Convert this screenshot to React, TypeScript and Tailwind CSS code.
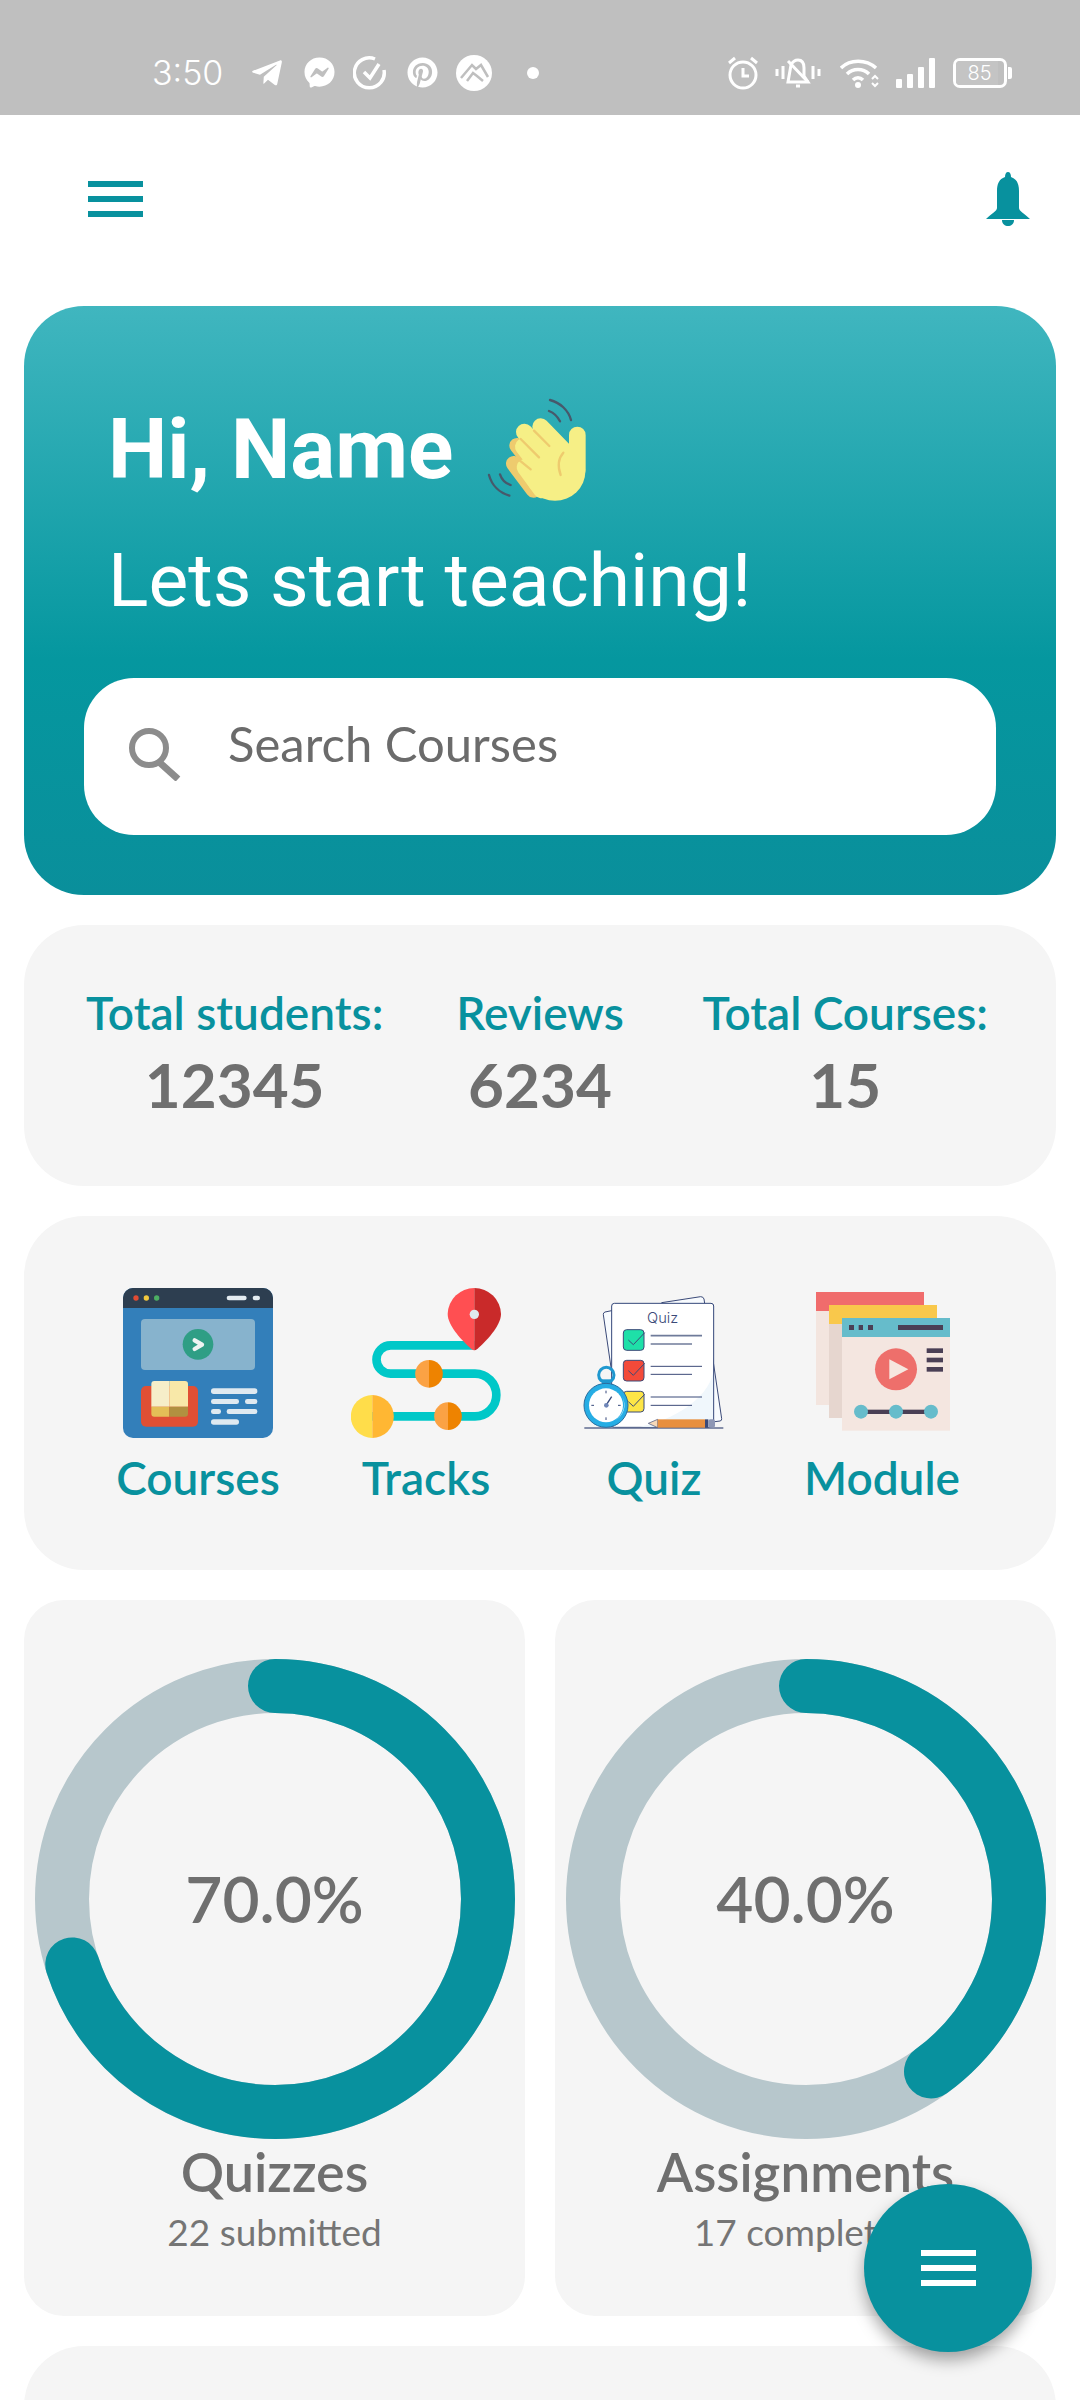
import { FaTelegramPlane, FaFacebookMessenger, FaPinterest } from 'react-icons/fa';

const tools = [
  { label: 'Courses', icon: CoursesIcon },
  { label: 'Tracks', icon: TracksIcon },
  { label: 'Quiz', icon: QuizIcon },
  { label: 'Module', icon: ModuleIcon },
];

const stats = [
  { label: 'Total students:', value: '12345' },
  { label: 'Reviews', value: '6234' },
  { label: 'Total Courses:', value: '15' },
];

function CoursesIcon() {
  return (
    <svg viewBox="99 84 450 450" className="w-[150px] h-[150px]">
      <rect x="99" y="84" width="450" height="450" rx="30" fill="#337fba" />
      <path d="M99 144V114a30 30 0 0 1 30-30H519a30 30 0 0 1 30 30V144Z" fill="#2d3e50" />
      <circle cx="138" cy="114" r="8" fill="#e24b33" />
      <circle cx="169" cy="114" r="8" fill="#f2c83e" />
      <circle cx="200" cy="114" r="8" fill="#4caf63" />
      <rect x="410" y="107" width="60" height="14" rx="7" fill="#e4ecf1" />
      <rect x="488" y="107" width="22" height="14" rx="7" fill="#e4ecf1" />
      <rect x="153" y="177" width="342" height="153" rx="12" fill="#87b3cd" />
      <circle cx="324" cy="253" r="46" fill="#2f9e85" />
      <path d="M314 241L336 254L314 267" fill="none" stroke="#eef4f2" strokeWidth="13" strokeLinecap="round" strokeLinejoin="round" />
      <rect x="153" y="378" width="171" height="122" rx="15" fill="#e04f34" />
      <path d="M184 372a9 9 0 0 1 9-9H238V440H184Z" fill="#f6eec9" />
      <path d="M238 363H285a9 9 0 0 1 9 9V440H238Z" fill="#f8e8a8" />
      <path d="M184 440H238V470H193a9 9 0 0 1-9-9Z" fill="#e4bf57" />
      <path d="M238 440H294V461a9 9 0 0 1-9 9H238Z" fill="#b19040" />
      <g fill="#dfe9f0">
        <rect x="363" y="385" width="139" height="17" rx="8" />
        <rect x="363" y="417" width="84" height="15" rx="7" />
        <rect x="465" y="417" width="37" height="15" rx="7" />
        <rect x="363" y="447" width="30" height="15" rx="7" />
        <rect x="410" y="447" width="92" height="15" rx="7" />
        <rect x="363" y="478" width="84" height="16" rx="8" />
      </g>
    </svg>
  );
}

function TracksIcon() {
  return (
    <svg viewBox="783 84 450 450" className="w-[150px] h-[150px]">
      <path d="M847 469H1155A64 64 0 0 0 1155 341H902A42.500 42.500 0 0 1 902 256H1153" fill="none" stroke="#00c8c8" strokeWidth="26" />
      <path d="M1153 84A80 80 0 0 0 1073 162C1073 198 1120 246 1143 266Q1153 273 1153 270Z" fill="#ff4f52" />
      <path d="M1153 84A80 80 0 0 1 1233 162C1233 198 1186 246 1163 266Q1153 273 1153 270Z" fill="#c92a2a" />
      <circle cx="1153" cy="163" r="14" fill="#dfe9ec" />
      <path d="M1017 300a41 41 0 0 0 0 83Z" fill="#fba244" />
      <path d="M1017 300a41 41 0 0 1 0 83Z" fill="#ee8300" />
      <path d="M1074 427a41 41 0 0 0 0 83Z" fill="#fba244" />
      <path d="M1074 427a41 41 0 0 1 0 83Z" fill="#ee8300" />
      <path d="M847 405a64 64 0 0 0 0 129Z" fill="#ffdd4a" />
      <path d="M847 405a64 64 0 0 1 0 129Z" fill="#ffb733" />
    </svg>
  );
}

function QuizIcon() {
  return (
    <svg viewBox="57 84 450 450" className="w-[150px] h-[150px]">
      <path d="M155 152L135 156Q129 158 130 164L160 370H200V200Z" fill="#f8fbfe" stroke="#3b4a78" strokeWidth="3" />
      <path d="M305 128L422 110Q430 110 432 117L485 476Q486 482 480 483L440 488Z" fill="#f8fbfe" stroke="#3b4a78" strokeWidth="3" />
      <rect x="155" y="130" width="306" height="372" rx="8" fill="#ffffff" stroke="#34477a" strokeWidth="3" />
      <path d="M459 340C440 420 340 480 240 500H459Z" fill="#f0f7fc" />
      <text x="308" y="188" textAnchor="middle" fontSize="44" fill="#3b4a78" className="font-['Inter',sans-serif] font-light">Quiz</text>
      <rect x="190" y="209" width="62" height="62" rx="10" fill="#1ee0a8" stroke="#3b4a78" strokeWidth="3" />
      <rect x="190" y="301" width="62" height="62" rx="10" fill="#f34a3a" stroke="#3b4a78" strokeWidth="3" />
      <rect x="190" y="394" width="62" height="62" rx="10" fill="#fde546" stroke="#3b4a78" strokeWidth="3" />
      <g fill="none" stroke="#3b4a78" strokeWidth="3">
        <path d="M205 240L220 254L254 218" />
        <path d="M205 332L220 346L254 310" />
        <path d="M205 425L220 439L254 403" />
      </g>
      <g stroke="#6f7b9a" strokeWidth="5">
        <path d="M272 227H426" />
        <path d="M272 252H396" />
      </g>
      <g stroke="#3b4a78" strokeWidth="3">
        <path d="M272 319H426" />
        <path d="M272 343H396" />
        <path d="M272 411H426" />
        <path d="M272 436H396" />
      </g>
      <path d="M73 504H490" stroke="#5f6b8f" strokeWidth="4" />
      <path d="M265 490L293 478V503Z" fill="#f6d8b8" stroke="#3b4a78" strokeWidth="2" />
      <rect x="293" y="478" width="142" height="25" fill="#e88f3f" />
      <rect x="435" y="478" width="10" height="25" fill="#3b4a78" />
      <rect x="445" y="478" width="20" height="25" rx="6" fill="#8e97b5" />
      <circle cx="139" cy="345" r="23" fill="none" stroke="#1f98cf" strokeWidth="9" />
      <rect x="126" y="358" width="26" height="14" fill="#1f98cf" />
      <circle cx="138" cy="436" r="66" fill="#26ade4" stroke="#2a6d9e" strokeWidth="3" />
      <circle cx="138" cy="436" r="51" fill="#ffffff" />
      <path d="M187 410A56 56 0 0 1 166 481A52 52 0 0 0 187 410Z" fill="#d4eefa" />
      <path d="M138 436L155 410" stroke="#34477a" strokeWidth="4" />
      <circle cx="139" cy="436" r="7" fill="#6f86b8" />
      <g stroke="#34477a" strokeWidth="3">
        <path d="M138 392V400" />
        <path d="M138 472V480" />
        <path d="M94 436H102" />
        <path d="M174 436H182" />
      </g>
    </svg>
  );
}

function ModuleIcon() {
  return (
    <svg viewBox="741 84 450 450" className="w-[150px] h-[150px]">
      <rect x="768" y="96" width="324" height="339" fill="#f3e5df" />
      <rect x="768" y="96" width="324" height="57" fill="#f06c6c" />
      <rect x="807" y="135" width="324" height="339" fill="#e6d6cf" />
      <rect x="807" y="135" width="324" height="57" fill="#f9c84b" />
      <rect x="846" y="174" width="324" height="338" fill="#f4e6e0" />
      <rect x="846" y="174" width="324" height="57" fill="#66bccb" />
      <g fill="#4a3f55">
        <rect x="867" y="195" width="15" height="15" />
        <rect x="896" y="195" width="13" height="15" />
        <rect x="924" y="195" width="15" height="15" />
        <rect x="1014" y="195" width="135" height="15" />
        <rect x="1100" y="265" width="49" height="14" />
        <rect x="1100" y="293" width="49" height="14" />
        <rect x="1100" y="321" width="49" height="14" />
        <rect x="903" y="449" width="210" height="13" />
      </g>
      <circle cx="1008" cy="328" r="63" fill="#ee6f6b" />
      <path d="M988 298L1045 328L988 358Z" fill="#f6e7df" />
      <g fill="#66bccb">
        <circle cx="903" cy="455" r="21" />
        <circle cx="1008" cy="455" r="21" />
        <circle cx="1113" cy="455" r="21" />
      </g>
    </svg>
  );
}

function WaveHand() {
  return (
    <svg viewBox="0 0 390 390" className="w-[130px] h-[130px]">
      <g fill="none" strokeLinecap="round" stroke="#47596b" strokeWidth="7">
        <path d="M240 60C270 68 295 90 303 120" />
        <path d="M237 93C250 98 262 108 270 124" />
        <path d="M57 285C65 315 88 338 118 347" />
        <path d="M90 283C95 298 106 310 122 315" />
      </g>
      {/* shaded back fingers */}
      <g fill="none" strokeLinecap="round" stroke="#eecb6e" strokeWidth="46">
        <path d="M141 197L190 260" />
        <path d="M131 251L190 330" />
      </g>
      {/* hand */}
      <g fill="none" strokeLinecap="round" stroke="#f6ef86" strokeWidth="50">
        <path d="M322 165V270" />
        <path d="M212 140L295 225" />
        <path d="M163 156L250 250" />
        <path d="M160 200L225 285" />
        <path d="M165 262L215 330" />
      </g>
      <ellipse cx="255" cy="275" rx="91" ry="87" fill="#f6ef86" />
      <g fill="none" strokeLinecap="round" stroke="#eecb6e" strokeWidth="7">
        <path d="M192 152L238 198" />
        <path d="M152 177L207 232" />
        <path d="M145 238L182 268" />
        <path d="M280 218C265 235 263 260 272 285" />
      </g>
    </svg>
  );
}

function SearchIcon() {
  return (
    <svg viewBox="0 0 54 54" className="w-[54px] h-[54px] shrink-0" fill="none" stroke="#8c8c8c">
      <circle cx="21" cy="21" r="17" strokeWidth="6" />
      <path d="M31 35L50 52" strokeWidth="7" />
    </svg>
  );
}

function Ring({ percent }: { percent: number }) {
  const radius = 213;
  const circumference = 2 * Math.PI * radius;
  return (
    <div className="relative w-[480px] h-[480px]">
      <svg viewBox="0 0 480 480" className="w-full h-full -rotate-90">
        <circle cx="240" cy="240" r={radius} fill="none" stroke="#b7c7cc" strokeWidth="54" />
        <circle
          cx="240"
          cy="240"
          r={radius}
          fill="none"
          stroke="#08919e"
          strokeWidth="54"
          strokeLinecap="round"
          strokeDasharray={`${(circumference * percent) / 100} ${circumference}`}
        />
      </svg>
      <div className="absolute inset-0 flex items-center justify-center text-[64px] font-semibold text-[#6f6f6f]">
        {percent.toFixed(1)}%
      </div>
    </div>
  );
}

function StatusBar() {
  return (
    <div className="h-[115px] shrink-0 bg-[#bfbfbf] flex items-center justify-between pt-[30px] pl-[152px] pr-[68px] text-white">
      <div className="flex items-center">
        <span className="text-[34px] font-light font-['Inter',sans-serif] w-[98px]">3:50</span>
        <FaTelegramPlane className="w-[34px] h-[34px]" />
        <FaFacebookMessenger className="w-[31px] h-[31px] ml-[20px]" />
        <svg viewBox="0 0 34 34" className="w-[34px] h-[34px] ml-[18px]" fill="none" stroke="white" strokeWidth="3.500">
          <path d="M22 3A15 15 0 1 0 31 14" />
          <path d="M11 16L17 22L26 8" />
        </svg>
        <FaPinterest className="w-[31px] h-[31px] ml-[20px]" />
        <svg viewBox="0 0 36 36" className="w-[36px] h-[36px] ml-[18px]">
          <circle cx="18" cy="18" r="18" fill="white" />
          <path d="M5 23L16 10L20 14L25 10L32 22M11 26L17 18L21 21L27 26" fill="none" stroke="#bfbfbf" strokeWidth="2.500" />
        </svg>
        <span className="w-[12px] h-[12px] rounded-full bg-white ml-[35px]" />
      </div>
      <div className="flex items-center">
        <svg viewBox="0 0 32 34" className="w-[32px] h-[34px]" fill="none" stroke="white" strokeWidth="3">
          <circle cx="16" cy="19" r="13" />
          <path d="M16 12V20H22" />
          <path d="M2 7L8 2M30 7L24 2" />
        </svg>
        <svg viewBox="0 0 46 34" className="w-[46px] h-[34px] ml-[16px]" fill="none" stroke="white" strokeWidth="3">
          <path d="M2 13V20M8 10V23M38 10V23M44 13V20" />
          <path d="M13 26H33L29 20V12C29 6 26 4 23 4C20 4 18 5 16 9Z" />
          <path d="M13 5L33 26" />
          <path d="M21 30H25" />
        </svg>
        <svg viewBox="0 0 40 30" className="w-[40px] h-[30px] ml-[19px]" fill="none" stroke="white" strokeWidth="3.500">
          <path d="M1 10C10 1 26 1 36 10" />
          <path d="M7 16C13 10 23 10 29 16" />
          <path d="M13 22C16 19 20 19 23 22" />
          <circle cx="18" cy="27" r="3" fill="white" stroke="none" />
          <path d="M32 21L35 18L38 21M32 25L35 28L38 25" strokeWidth="2" />
        </svg>
        <div className="flex items-end gap-[5px] h-[30px] ml-[16px]">
          <span className="w-[6px] h-[9px] bg-white rounded-[1px]" />
          <span className="w-[6px] h-[14px] bg-white rounded-[1px]" />
          <span className="w-[6px] h-[21px] bg-white rounded-[1px]" />
          <span className="w-[6px] h-[30px] bg-white rounded-[1px]" />
        </div>
        <div className="flex items-center ml-[18px]">
          <div className="w-[54px] h-[30px] rounded-[7px] border-[3px] border-white flex items-center overflow-hidden">
            <span className="w-[42px] h-full bg-[#c4c4c4] text-[20px] font-light leading-none flex items-center justify-center font-['Inter',sans-serif] pl-[5px]">85</span>
          </div>
          <span className="w-[4px] h-[12px] bg-white rounded-r-[2px] ml-[1px]" />
        </div>
      </div>
    </div>
  );
}

export default function App() {
  return (
    <div className="relative h-[2400px] overflow-hidden bg-white flex flex-col font-['Lato',sans-serif]">
      <StatusBar />

      {/* Top bar */}
      <div className="h-[191px] shrink-0 flex items-center justify-between pl-[88px] pr-[50px] pb-[23px]">
        <div className="w-[55px] flex flex-col gap-[9px]">
          <span className="h-[6px] bg-[#08919e]" />
          <span className="h-[6px] bg-[#08919e]" />
          <span className="h-[6px] bg-[#08919e]" />
        </div>
        <svg viewBox="0 0 44 54" className="w-[44px] h-[54px]" fill="#08919e">
          <path d="M22 0C24 0 25 2 25 5C31 7 33 12 33 19V36C33 39 38 41 44 47H0C6 41 11 39 11 36V19C11 12 13 7 19 5C19 2 20 0 22 0Z" />
          <path d="M16 48H28C28 52 25 54 22 54C19 54 16 52 16 48Z" />
        </svg>
      </div>

      <div className="flex flex-col gap-[30px] px-[24px]">
        {/* Hero */}
        <div className="h-[589px] rounded-[60px] bg-[linear-gradient(180deg,#40b6bf_0%,#05979f_60%,#0a8f9b_100%)] px-[60px] pt-[79px] flex flex-col">
          <div className="flex items-center pl-[24px] h-[130px] font-['Roboto',sans-serif]">
            <span className="text-[84px] font-bold text-white leading-none">Hi, Name</span>
            <span className="ml-[17px] mb-[10px]"><WaveHand /></span>
          </div>
          <p className="pl-[24px] text-[75px] text-white leading-none mt-[28px] font-['Roboto',sans-serif]">Lets start teaching!</p>
          <div className="mt-[60px] h-[157px] shrink-0 rounded-[50px] bg-white flex items-center pl-[44px] pb-[5px]">
            <SearchIcon />
            <span className="ml-[46px] pb-[20px] text-[49px] text-[#6b6b6b]">Search Courses</span>
          </div>
        </div>

        {/* Stats */}
        <div className="h-[261px] rounded-[60px] bg-[#f5f5f5] grid grid-cols-3 px-[58px] pt-[60px]">
          {stats.map((stat) => (
            <div key={stat.label} className="flex flex-col items-center">
              <span className="text-[46px] font-semibold leading-[56px] text-[#08919e] whitespace-nowrap">{stat.label}</span>
              <span className="mt-[8px] text-[62px] font-bold leading-[70px] text-[#6f6f6f]">{stat.value}</span>
            </div>
          ))}
        </div>

        {/* Tools */}
        <div className="h-[354px] rounded-[60px] bg-[#f5f5f5] grid grid-cols-4 px-[60px] pt-[72px]">
          {tools.map((tool) => (
            <div key={tool.label} className="flex flex-col items-center">
              <tool.icon />
              <span className="mt-[10px] text-[46px] font-semibold leading-[60px] text-[#08919e]">{tool.label}</span>
            </div>
          ))}
        </div>

        {/* Progress */}
        <div className="grid grid-cols-2 gap-[30px]">
          <div className="h-[716px] rounded-[40px] bg-[#f5f5f5] flex flex-col items-center pt-[59px]">
            <Ring percent={70} />
            <span className="mt-[3px] text-[54px] font-semibold leading-[60px] text-[#6f6f6f]">Quizzes</span>
            <span className="mt-[8px] text-[37px] leading-[44px] text-[#757575]">22 submitted</span>
          </div>
          <div className="h-[716px] rounded-[40px] bg-[#f5f5f5] flex flex-col items-center pt-[59px]">
            <Ring percent={40} />
            <span className="mt-[3px] text-[53px] font-semibold leading-[60px] text-[#6f6f6f]">Assignments</span>
            <span className="mt-[8px] text-[37px] leading-[44px] text-[#757575]">17 completed</span>
          </div>
        </div>

        <div className="h-[200px] rounded-[60px] bg-[#f5f5f5]" />
      </div>

      {/* FAB */}
      <button className="absolute left-[864px] top-[2184px] w-[168px] h-[168px] rounded-full bg-[#08919e] flex flex-col items-center justify-center gap-[9px] shadow-[0_8px_16px_rgba(0,0,0,0.35)]">
        <span className="w-[55px] h-[6px] bg-white" />
        <span className="w-[55px] h-[6px] bg-white" />
        <span className="w-[55px] h-[6px] bg-white" />
      </button>
    </div>
  );
}
